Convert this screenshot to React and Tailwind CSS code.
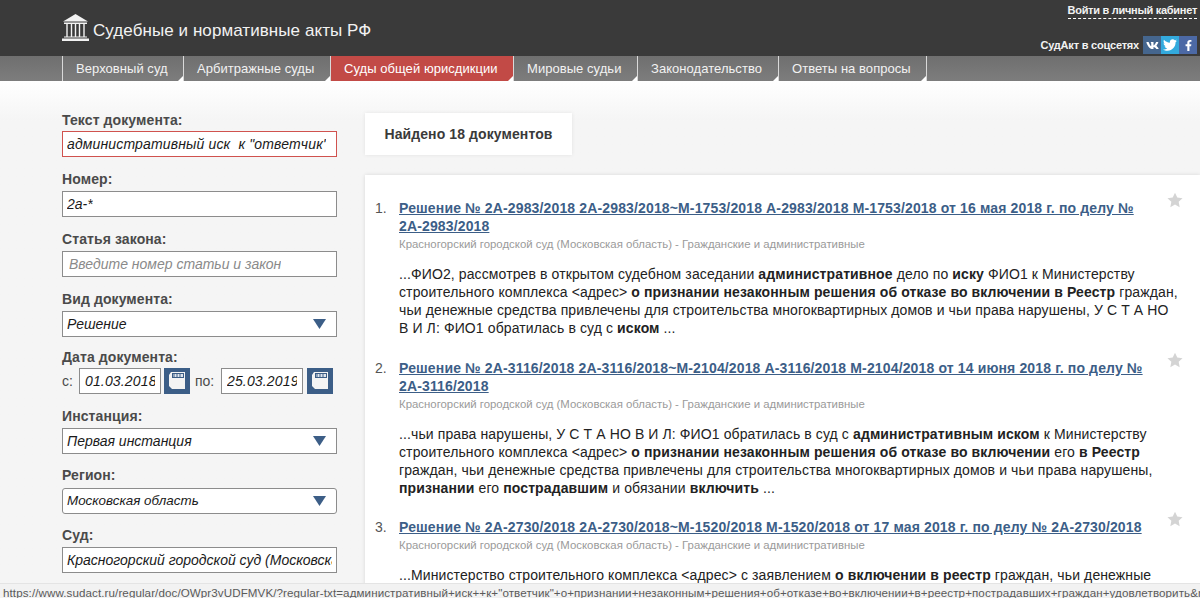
import { FaVk, FaTwitter, FaFacebookF } from "react-icons/fa";

const font = "font-['Liberation_Sans',Arial,sans-serif]";

function Tab({ label, active, w }) {
  return (
    <div className={`relative flex h-[25px] items-center whitespace-nowrap border-l border-[#d9d9d9] pl-[13px] text-[13px] tracking-[0.05px] ${w} ${active ? "bg-[#c24a46] text-white" : "text-[#f2f2f2]"}`}>
      {label}
      <span className="absolute bottom-0 right-0 h-0 w-0 border-b-[5px] border-l-[5px] border-b-white border-l-transparent" />
    </div>
  );
}

function Label({ children }) {
  return <div className="text-[14px] font-bold leading-[18px] tracking-[0.1px] text-[#4a4a4a]">{children}</div>;
}

function Field({ children, red, muted, select, rounded, small, wide, clip }) {
  return (
    <div className={`flex h-[26px] w-[275px] items-center justify-between overflow-hidden whitespace-pre border bg-white italic ${clip ? "pr-[4px]" : "pr-[10px]"} ${small ? "text-[13.4px]" : "text-[14px]"} ${wide ? "tracking-[0.15px]" : ""} ${red ? "border-[#d0524e]" : "border-[#8c8c8c]"} ${muted ? "pl-[6px] text-[#8a8a8a]" : "pl-[4px] text-[#1a1a1a]"} ${rounded ? "rounded-[3px]" : ""}`}>
      <span className="overflow-hidden">{children}</span>
      {select && (
        <svg width="13" height="10" viewBox="0 0 13 10" className="shrink-0">
          <path d="M0 0H13L6.500 10Z" fill="#3c5e87" />
        </svg>
      )}
    </div>
  );
}

function Calendar({ ml }) {
  return (
    <div className={`flex h-[26px] w-[26px] items-center justify-center bg-[#3c5e87] ${ml}`}>
      <svg width="20" height="22" viewBox="0 0 20 22">
        <path d="M4 2H18V19H5L2 16V5Z" fill="#f4f4f4" />
        <rect x="5" y="3" width="12" height="5" fill="#3c5e87" />
        <rect x="6" y="4" width="10" height="3" fill="#dfe6ee" />
        <path d="M7 4V7M10 4V7M13 4V7" stroke="#3c5e87" strokeWidth="1" />
      </svg>
    </div>
  );
}

function DateInput({ value }) {
  return (
    <div className="flex h-[26px] w-[82px] items-center overflow-hidden whitespace-nowrap border border-[#8c8c8c] bg-white pl-[5px] text-[14px] italic tracking-[0.15px] text-[#1a1a1a]">
      <span className="block w-[70px] overflow-hidden">{value}</span>
    </div>
  );
}

function Result({ n, title, children, className }) {
  return (
    <div className={`relative flex ${className}`}>
      <div className="w-[34px] shrink-0 pl-[10px] text-[14px] leading-[18px] text-[#555]">{n}.</div>
      <div className="w-[782px]">
        <a className="block w-[750px] text-[14px] font-bold leading-[18px] tracking-[0.14px] text-[#3c5e87] underline">{title}</a>
        <div className="text-[11.4px] leading-[18px] text-[#9a9a9a]">Красногорский городской суд (Московская область) - Гражданские и административные</div>
        <div className="mt-[12px] text-[14px] leading-[18px] tracking-[0.11px] text-[#222]">{children}</div>
      </div>
      <svg width="16" height="16" viewBox="0 0 24 24" className="absolute left-[802px] top-[-7px]">
        <path d="M12 1l3.4 7.3 7.9 1-5.8 5.5 1.5 7.9L12 18.8l-7 3.9 1.5-7.9L.7 9.3l7.9-1z" fill="#d4d4d4" />
      </svg>
    </div>
  );
}

export default function App() {
  return (
    <div className={`${font} relative flex h-[598px] w-[1200px] flex-col overflow-hidden bg-[#f5f5f5]`}>
      <header className="flex h-[56px] shrink-0 items-start justify-between bg-[#3a3a3a] pl-[62px] pr-[3px]">
        <div className="mt-[14px] flex items-start">
          <svg width="27" height="27" viewBox="0 0 27 27">
            <path d="M13.5 0L26 7.500H1Z" fill="#f2f2f2" />
            <rect x="2" y="8.500" width="23" height="1.500" fill="#f2f2f2" />
            <path d="M5 10V23M9.500 10V23M13.500 10V23M17.500 10V23M22 10V23" stroke="#f2f2f2" strokeWidth="1.400" />
            <rect x="2" y="22.500" width="23" height="1" fill="#f2f2f2" />
            <rect x="0" y="24.500" width="27" height="2.500" fill="#f2f2f2" />
          </svg>
          <span className="ml-[4px] mt-[5px] text-[17px] leading-[24px] tracking-[0.07px] text-[#f2f2f2]">Судебные и нормативные акты РФ</span>
        </div>
        <div className="flex flex-col items-end">
          <div className="mt-[3px] border-b border-dashed border-white pb-[1px] text-[11px] font-bold leading-[14px] tracking-[-0.28px] text-[#f2f2f2]">Войти в личный кабинет</div>
          <div className="mt-[17px] flex items-center">
            <span className="text-[11px] font-bold leading-[14px] tracking-[-0.2px] text-[#f2f2f2]">СудАкт в соцсетях</span>
            <div className="ml-[4px] flex h-[18px] text-white">
              <div className="flex w-[18px] items-center justify-center bg-[#45668e]"><FaVk size={13} /></div>
              <div className="flex w-[18px] items-center justify-center bg-[#33aadd]"><FaTwitter size={14} /></div>
              <div className="flex w-[18px] items-center justify-center bg-[#4c69a5]"><FaFacebookF size={11} /></div>
            </div>
          </div>
        </div>
      </header>

      <nav className="flex h-[25px] shrink-0 bg-gradient-to-b from-[#6f6f6f] to-[#7d7d7d] pl-[62px]">
        <Tab label="Верховный суд" w="w-[121px]" />
        <Tab label="Арбитражные суды" w="w-[147px]" />
        <Tab label="Суды общей юрисдикции" w="w-[183px]" active />
        <Tab label="Мировые судьи" w="w-[124px]" />
        <Tab label="Законодательство" w="w-[141px]" />
        <Tab label="Ответы на вопросы" w="w-[148px]" />
        <div className="h-[25px] border-l border-[#d9d9d9]" />
      </nav>

      <main className="flex min-h-0 flex-1 bg-gradient-to-b from-white to-[#f5f5f5] to-[40px] pl-[62px]">
        <aside className="w-[303px] shrink-0 pt-[30px]">
          <Label>Текст документа:</Label>
          <div className="mt-[2px]"><Field red wide>административный иск  к "ответчик"</Field></div>
          <div className="mt-[13px]"><Label>Номер:</Label></div>
          <div className="mt-[3px]"><Field>2а-*</Field></div>
          <div className="mt-[13px]"><Label>Статья закона:</Label></div>
          <div className="mt-[3px]"><Field muted>Введите номер статьи и закон</Field></div>
          <div className="mt-[13px]"><Label>Вид документа:</Label></div>
          <div className="mt-[3px]"><Field select>Решение</Field></div>
          <div className="mt-[11px] text-[14px] font-bold leading-[18px] tracking-[0.1px] text-[#4a4a4a]">Дата документа:</div>
          <div className="mt-[2px] flex items-center text-[14px] text-[#4a4a4a]">
            <span className="w-[17px]">с:</span>
            <DateInput value="01.03.2018" />
            <Calendar ml="ml-[3px]" />
            <span className="ml-[5px] w-[26px]">по:</span>
            <DateInput value="25.03.2019" />
            <Calendar ml="ml-[4px]" />
          </div>
          <div className="mt-[13px]"><Label>Инстанция:</Label></div>
          <div className="mt-[3px]"><Field select>Первая инстанция</Field></div>
          <div className="mt-[12px]"><Label>Регион:</Label></div>
          <div className="mt-[4px]"><Field select rounded small>Московская область</Field></div>
          <div className="mt-[12px]"><Label>Суд:</Label></div>
          <div className="mt-[3px]"><Field clip>Красногорский городской суд (Московская область)</Field></div>
        </aside>

        <section className="min-w-0 flex-1 pt-[32px]">
          <div className="flex h-[42px] w-[207px] items-center justify-center bg-white text-[14px] font-bold tracking-[0.1px] text-[#3a3a3a] shadow-[0_0_4px_rgba(0,0,0,0.08)]">Найдено 18 документов</div>
          <div className="mt-[20px] h-[500px] bg-white pt-[24px] shadow-[0_0_4px_rgba(0,0,0,0.12)]">
            <Result n="1" title="Решение № 2А-2983/2018 2А-2983/2018~М-1753/2018 А-2983/2018 М-1753/2018 от 16 мая 2018 г. по делу № 2А-2983/2018">
              ...ФИО2, рассмотрев в открытом судебном заседании <b>административное</b> дело по <b>иску</b> ФИО1 к Министерству строительного комплекса &lt;адрес&gt; <b>о признании незаконным решения об отказе во включении в Реестр</b> граждан, чьи денежные средства привлечены для строительства многоквартирных домов и чьи права нарушены, У С Т А НО В И Л: ФИО1 обратилась в суд с <b>иском</b> ...
            </Result>
            <Result className="mt-[22px]" n="2" title="Решение № 2А-3116/2018 2А-3116/2018~М-2104/2018 А-3116/2018 М-2104/2018 от 14 июня 2018 г. по делу № 2А-3116/2018">
              ...чьи права нарушены, У С Т А НО В И Л: ФИО1 обратилась в суд с <b>административным иском</b> к Министерству строительного комплекса &lt;адрес&gt; <b>о признании незаконным решения об отказе во включении</b> его <b>в Реестр</b> граждан, чьи денежные средства привлечены для строительства многоквартирных домов и чьи права нарушены, <b>признании</b> его <b>пострадавшим</b> и обязании <b>включить</b> ...
            </Result>
            <Result className="mt-[21px]" n="3" title="Решение № 2А-2730/2018 2А-2730/2018~М-1520/2018 М-1520/2018 от 17 мая 2018 г. по делу № 2А-2730/2018">
              ...Министерство строительного комплекса &lt;адрес&gt; с заявлением <b>о включении в реестр</b> граждан, чьи денежные средства привлечены для строительства
            </Result>
          </div>
        </section>
      </main>

      <div className="absolute bottom-0 left-0 h-[15px] w-full overflow-hidden whitespace-nowrap border-t border-[#e4e4e4] bg-[#f2f2f2] pl-[3px] text-[11.6px] leading-[18px] tracking-[0.09px] text-[#5a5a5a]">
        https://www.sudact.ru/regular/doc/OWpr3vUDFMVK/?regular-txt=административный+иск++к+"ответчик"+о+признании+незаконным+решения+об+отказе+во+включении+в+реестр+пострадавших+граждан+удовлетворить&amp;regular-case_doc=2а-*
      </div>
    </div>
  );
}
